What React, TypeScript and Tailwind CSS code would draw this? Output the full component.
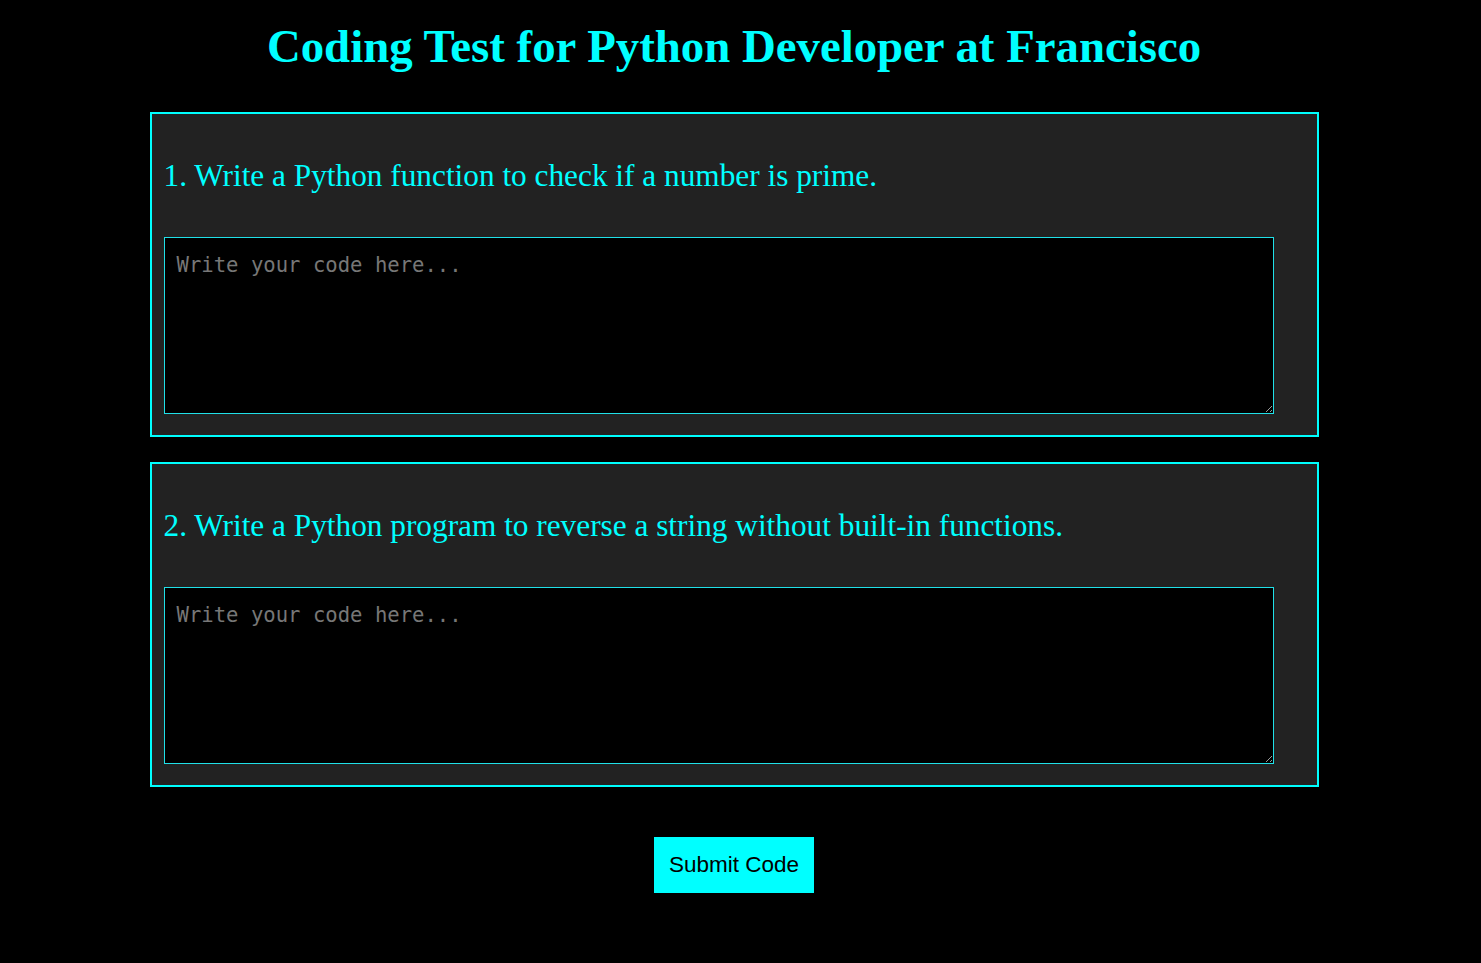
const questions = [
  "1. Write a Python function to check if a number is prime.",
  "2. Write a Python program to reverse a string without built-in functions.",
];

const QuestionBox = ({ text }: { text: string }) => (
  <div className="w-[1169px] border-2 border-[#00ffff] bg-[#222222] pl-[12px] pt-[44px] pb-[21px]">
    <h3 className="mb-[43px] text-[31.3px] leading-[normal] font-normal text-[#00ffff] [font-family:'Liberation_Serif',serif]">
      {text}
    </h3>
    <textarea
      className="block h-[177px] w-[1110px] border border-[#20e0e8] bg-black px-[12px] pt-[15px] pb-[12px] text-[20.6px] leading-[normal] text-white outline-none placeholder:text-[#777777] [font-family:'DejaVu_Sans_Mono',monospace]"
      placeholder="Write your code here..."
    />
  </div>
);

export default function App() {
  return (
    <div className="min-h-[963px] w-full bg-black pr-[13px]">
      <div className="flex flex-col items-center pt-[19px]">
        <h1 className="mb-[39px] text-[46.8px] leading-[normal] font-bold text-[#00ffff] [font-family:'Liberation_Serif',serif]">
          Coding Test for Python Developer at Francisco
        </h1>
        <div className="flex flex-col gap-[25px]">
          {questions.map((q) => (
            <QuestionBox key={q} text={q} />
          ))}
        </div>
        <button className="mt-[50px] bg-[#00ffff] px-[15px] py-[15px] text-[22.5px] leading-[normal] text-black [font-family:'Liberation_Sans',Arial,sans-serif]">
          Submit Code
        </button>
      </div>
    </div>
  );
}
